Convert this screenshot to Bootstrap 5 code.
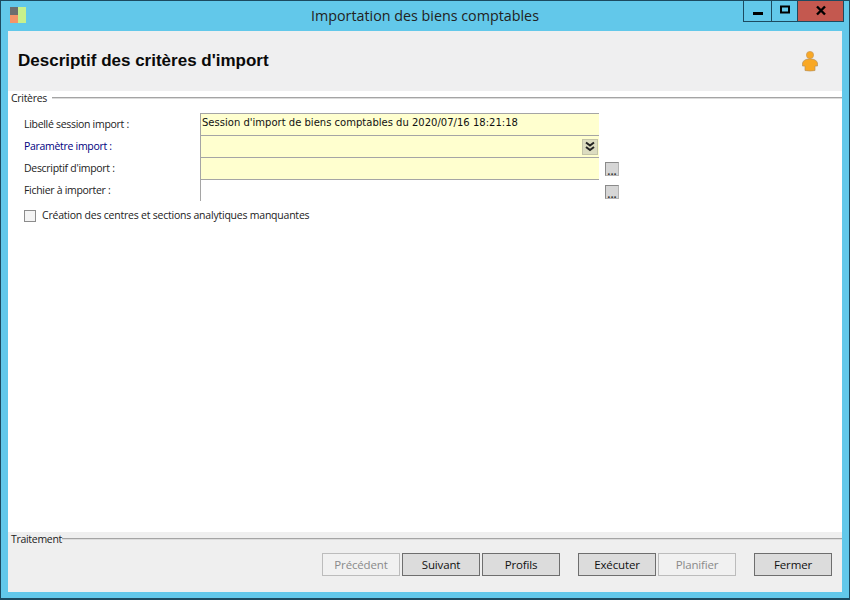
<!DOCTYPE html>
<html lang="fr">
<head>
<meta charset="utf-8">
<title>Importation des biens comptables</title>
<link href="https://cdn.jsdelivr.net/npm/bootstrap@5.3.0/dist/css/bootstrap.min.css" rel="stylesheet">
<style>
html,body{margin:0;height:600px;overflow:hidden}
body{font-family:"Open Sans","Liberation Sans",sans-serif;background:#62c8ea}
.win{width:850px;height:600px;background:#62c8ea;border:1px solid #1c4a60;border-bottom-width:2px;border-top-width:1px}
.tbar{height:30px;position:relative}
.tlogo{position:absolute;left:9px;top:6px}
.ttitle{font-size:14.3px;line-height:30px;color:#222;font-family:"Open Sans",sans-serif}
.wbtns{position:absolute;left:742px;top:0;height:21px;border:1px solid #1c4a60;border-top:0}
.wb{height:20px;border-right:1px solid #1c4a60}
.wb:last-child{border-right:0}
.wmin{width:28px}.wmax{width:26px}.wclose{width:45px;background:#c4584f}
.inner{width:834px;margin-left:7px;height:561px;background:#fff}
.hdr{height:60px;background:#efeff0;padding:0 10px}
.htitle{font-family:"Liberation Sans",sans-serif;font-weight:700;font-size:17px;color:#0a0a0a;margin:0}
.person{margin-right:14px}
.body-zone{height:441px;background:#fff}
.legend-row{height:14px;font-size:10.5px;color:#222;padding-left:3px;line-height:14px}
.legend-txt{font-family:"Open Sans",sans-serif;letter-spacing:-.3px}
.legend-line{height:2px;background:#a4a4a4;border-bottom:1px solid #dcdcdc;margin-left:5px}
.crit{padding:8px 0 0 16px}
.frow{height:22px;font-size:10.5px;color:#222;letter-spacing:-.3px}
.flab{width:176px;flex:none}
.flab-blue{color:#000080}
.finput{width:399px;height:22px;background:#ffffcf;border-top:1px solid #a5a5a5;border-left:1px solid #a5a5a5;font-family:"DejaVu Sans",sans-serif;font-size:10px;letter-spacing:.01px;color:#111;padding-left:1px;line-height:18px}
.finput-white{background:#fff}
.drop{width:16px;height:16px;background:#dcdcc0;border:1px solid #c4c4a8;margin-right:1px}
.dots{width:14px;height:14px;background:#d6d6d6;border:1px solid #8a8a8a;border-right-color:#b4b4b4;border-bottom-color:#b4b4b4;margin-left:6px;margin-top:5px;font-size:11px;font-weight:700;line-height:15px;text-align:center;color:#333;flex:none;letter-spacing:0}
.dots-low{margin-top:6px}
.chk{width:12px;height:12px;border:1px solid #8c8c8c;background:#f4f4f4;flex:none}
.chkrow{margin-top:7px;font-size:10.5px;color:#222;letter-spacing:-.22px;gap:6px}
.foot{height:60px;background:#efefef}
.foot .legend-line{margin-left:0}
.bbar{padding:7px 10px 0 314px}
.wbtn{height:23px;width:78px;flex:none;padding:0;border:1px solid #6e6e6e;border-radius:0;background:#dcdcdc;color:#111;font-size:11.5px;letter-spacing:-.15px;line-height:20px}
.wbtn:disabled{background:#f1f1f1;border-color:#bcbcbc;color:#8a8a8a;opacity:1}
.g1{margin-left:2px}.g2{margin-left:18px}
</style>
</head>
<body>
<div class="win">
  <div class="tbar text-center">
    <svg class="tlogo" width="16" height="16" viewBox="0 0 16 16"><rect x="0" y="0" width="8" height="8" fill="#6e6e6e"/><rect x="0" y="8" width="8" height="8" fill="#f59468"/><rect x="8" y="0" width="8" height="16" fill="#c8f08c"/></svg>
    <div class="ttitle">Importation des biens comptables</div>
    <div class="wbtns d-flex">
      <div class="wb wmin d-flex justify-content-center"><svg width="12" height="20" viewBox="0 0 12 20"><rect x="1" y="11" width="10" height="3" fill="#000"/></svg></div>
      <div class="wb wmax d-flex justify-content-center"><svg width="12" height="20" viewBox="0 0 12 20"><rect x="2" y="5.500" width="8" height="6" fill="none" stroke="#000" stroke-width="2"/></svg></div>
      <div class="wb wclose d-flex justify-content-center"><svg width="12" height="20" viewBox="0 0 12 20"><path d="M2 5.500L10 13.500M10 5.500L2 13.500" stroke="#000" stroke-width="2.400"/></svg></div>
    </div>
  </div>
  <div class="inner">
    <div class="hdr d-flex align-items-center justify-content-between">
      <h1 class="htitle">Descriptif des critères d'import</h1>
      <svg class="person" width="16" height="21" viewBox="0 0 16 21"><circle cx="8" cy="4" r="3.600" fill="#f9a825" stroke="#c99a5a" stroke-width=".7"/><path d="M4 8.500Q8 7 12 8.500Q15 9.500 15.500 12V15H13V19.500Q8 20.500 3 19.500V15H.5V12Q1 9.500 4 8.500Z" fill="#f9a825" stroke="#b9925a" stroke-width=".7"/></svg>
    </div>
    <div class="body-zone">
      <div class="legend-row d-flex align-items-center"><span class="legend-txt">Critères</span><div class="legend-line flex-grow-1"></div></div>
      <div class="crit">
        <div class="frow d-flex"><div class="flab pt-1">Libellé session import :</div><div class="finput">Session d'import de biens comptables du 2020/07/16 18:21:18</div></div>
        <div class="frow d-flex"><div class="flab flab-blue pt-1">Paramètre import :</div><div class="finput d-flex justify-content-end align-items-center"><div class="drop d-flex align-items-center justify-content-center"><svg width="10" height="11" viewBox="0 0 10 11"><path d="M1 1.500L5 4.500L9 1.500M1 6L5 9L9 6" fill="none" stroke="#222" stroke-width="2"/></svg></div></div></div>
        <div class="frow d-flex"><div class="flab pt-1">Descriptif d'import :</div><div class="finput"></div><div class="dots">...</div></div>
        <div class="frow d-flex"><div class="flab pt-1">Fichier à importer :</div><div class="finput finput-white"></div><div class="dots dots-low">...</div></div>
        <div class="chkrow d-flex align-items-center"><div class="chk"></div><span>Création des centres et sections analytiques manquantes</span></div>
      </div>
    </div>
    <div class="foot">
      <div class="legend-row d-flex align-items-center"><span class="legend-txt">Traitement</span><div class="legend-line flex-grow-1"></div></div>
      <div class="bbar d-flex">
        <button class="btn wbtn" disabled>Précédent</button>
        <button class="btn wbtn g1">Suivant</button>
        <button class="btn wbtn g1">Profils</button>
        <button class="btn wbtn g2">Exécuter</button>
        <button class="btn wbtn g1" disabled>Planifier</button>
        <button class="btn wbtn g2">Fermer</button>
      </div>
    </div>
  </div>
</div>
</body>
</html>
